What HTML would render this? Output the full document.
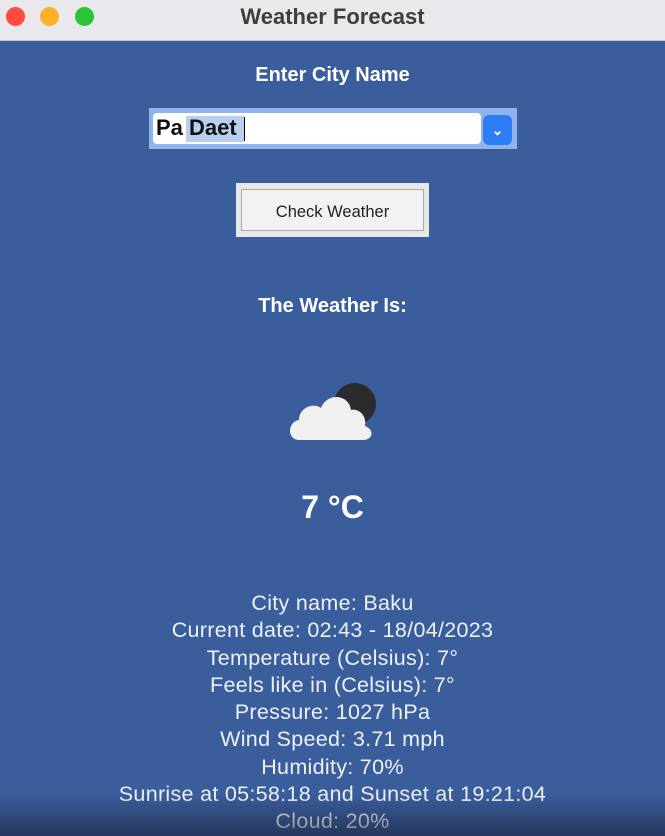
<!DOCTYPE html>
<html><head><style>
body{margin:0;width:665px;height:836px;overflow:hidden;background:#3a5d9c;font-family:"Liberation Sans",sans-serif;position:relative}
.tb{position:absolute;left:0;top:0;width:665px;height:40px;background:#e9e8ec;border-bottom:1px solid #c8c8cc}
.dot{position:absolute;top:7px;width:19px;height:19px;border-radius:50%}
.tt{position:absolute;top:4px;width:665px;text-align:center;font-weight:bold;font-size:22px;color:#3d3d3d}
.c{position:absolute;left:0;width:665px;text-align:center;color:#fff}
.lbl{font-weight:bold;font-size:20px}
.info{font-size:21.5px;letter-spacing:0.3px;line-height:27.3px;top:590px;color:#eef1f8}
.fade{position:absolute;left:0;top:795px;width:665px;height:41px;background:linear-gradient(rgba(20,25,40,0),rgba(20,25,40,0.55))}
</style></head><body>
<div class="tb">
<div class="dot" style="left:6px;background:#fe4a3f"></div>
<div class="dot" style="left:40px;background:#fdb12a"></div>
<div class="dot" style="left:75px;background:#2ac33a"></div>
<div class="tt">Weather Forecast</div>
</div>
<div class="c lbl" style="top:64px">Enter City Name</div>
<div style="position:absolute;left:149px;top:108px;width:368px;height:41px;background:#8fb4ec"></div>
<div style="position:absolute;left:153px;top:113px;width:328px;height:31px;background:#fff;border-radius:4px"></div>
<div style="position:absolute;left:186px;top:116px;width:58px;height:26px;background:#b9cff0"></div>
<div style="position:absolute;left:156px;top:115px;font-size:22px;font-weight:bold;color:#111">Pa Daet</div>
<div style="position:absolute;left:244px;top:117px;width:1px;height:24px;background:#000"></div>
<div style="position:absolute;left:483px;top:115px;width:29px;height:30px;background:#2d7ef5;border-radius:6px;color:#fff;text-align:center;font-size:14px;line-height:30px;font-weight:bold">&#8964;</div>
<div style="position:absolute;left:236px;top:183px;width:193px;height:54px;background:#e8e8e8"></div>
<div style="position:absolute;left:241px;top:189px;width:181px;height:40px;background:#f2f2f2;border:1px solid #aaa;text-align:center;line-height:44px;font-size:16.5px;color:#222">Check Weather</div>
<div class="c lbl" style="top:295px">The Weather Is:</div>
<svg style="position:absolute;left:285px;top:380px" width="95" height="65" viewBox="0 0 95 65">
<circle cx="70" cy="24" r="21" fill="#2b2b2e"/>
<path d="M14 60 C2 60 2 42 14 40 C14 28 28 22 36 28 C42 12 64 14 66 30 C72 28 82 34 80 46 C90 50 88 60 78 60 Z" fill="#f0f0f0"/>
</svg>
<div class="c" style="top:489px;font-size:32px;font-weight:bold">7 °C</div>
<div class="c info">City name: Baku<br>Current date: 02:43 - 18/04/2023<br>Temperature (Celsius): 7°<br>Feels like in (Celsius): 7°<br>Pressure: 1027 hPa<br>Wind Speed: 3.71 mph<br>Humidity: 70%<br>Sunrise at 05:58:18 and Sunset at 19:21:04<br>Cloud: 20%</div>
<div class="fade"></div>
</body></html>
